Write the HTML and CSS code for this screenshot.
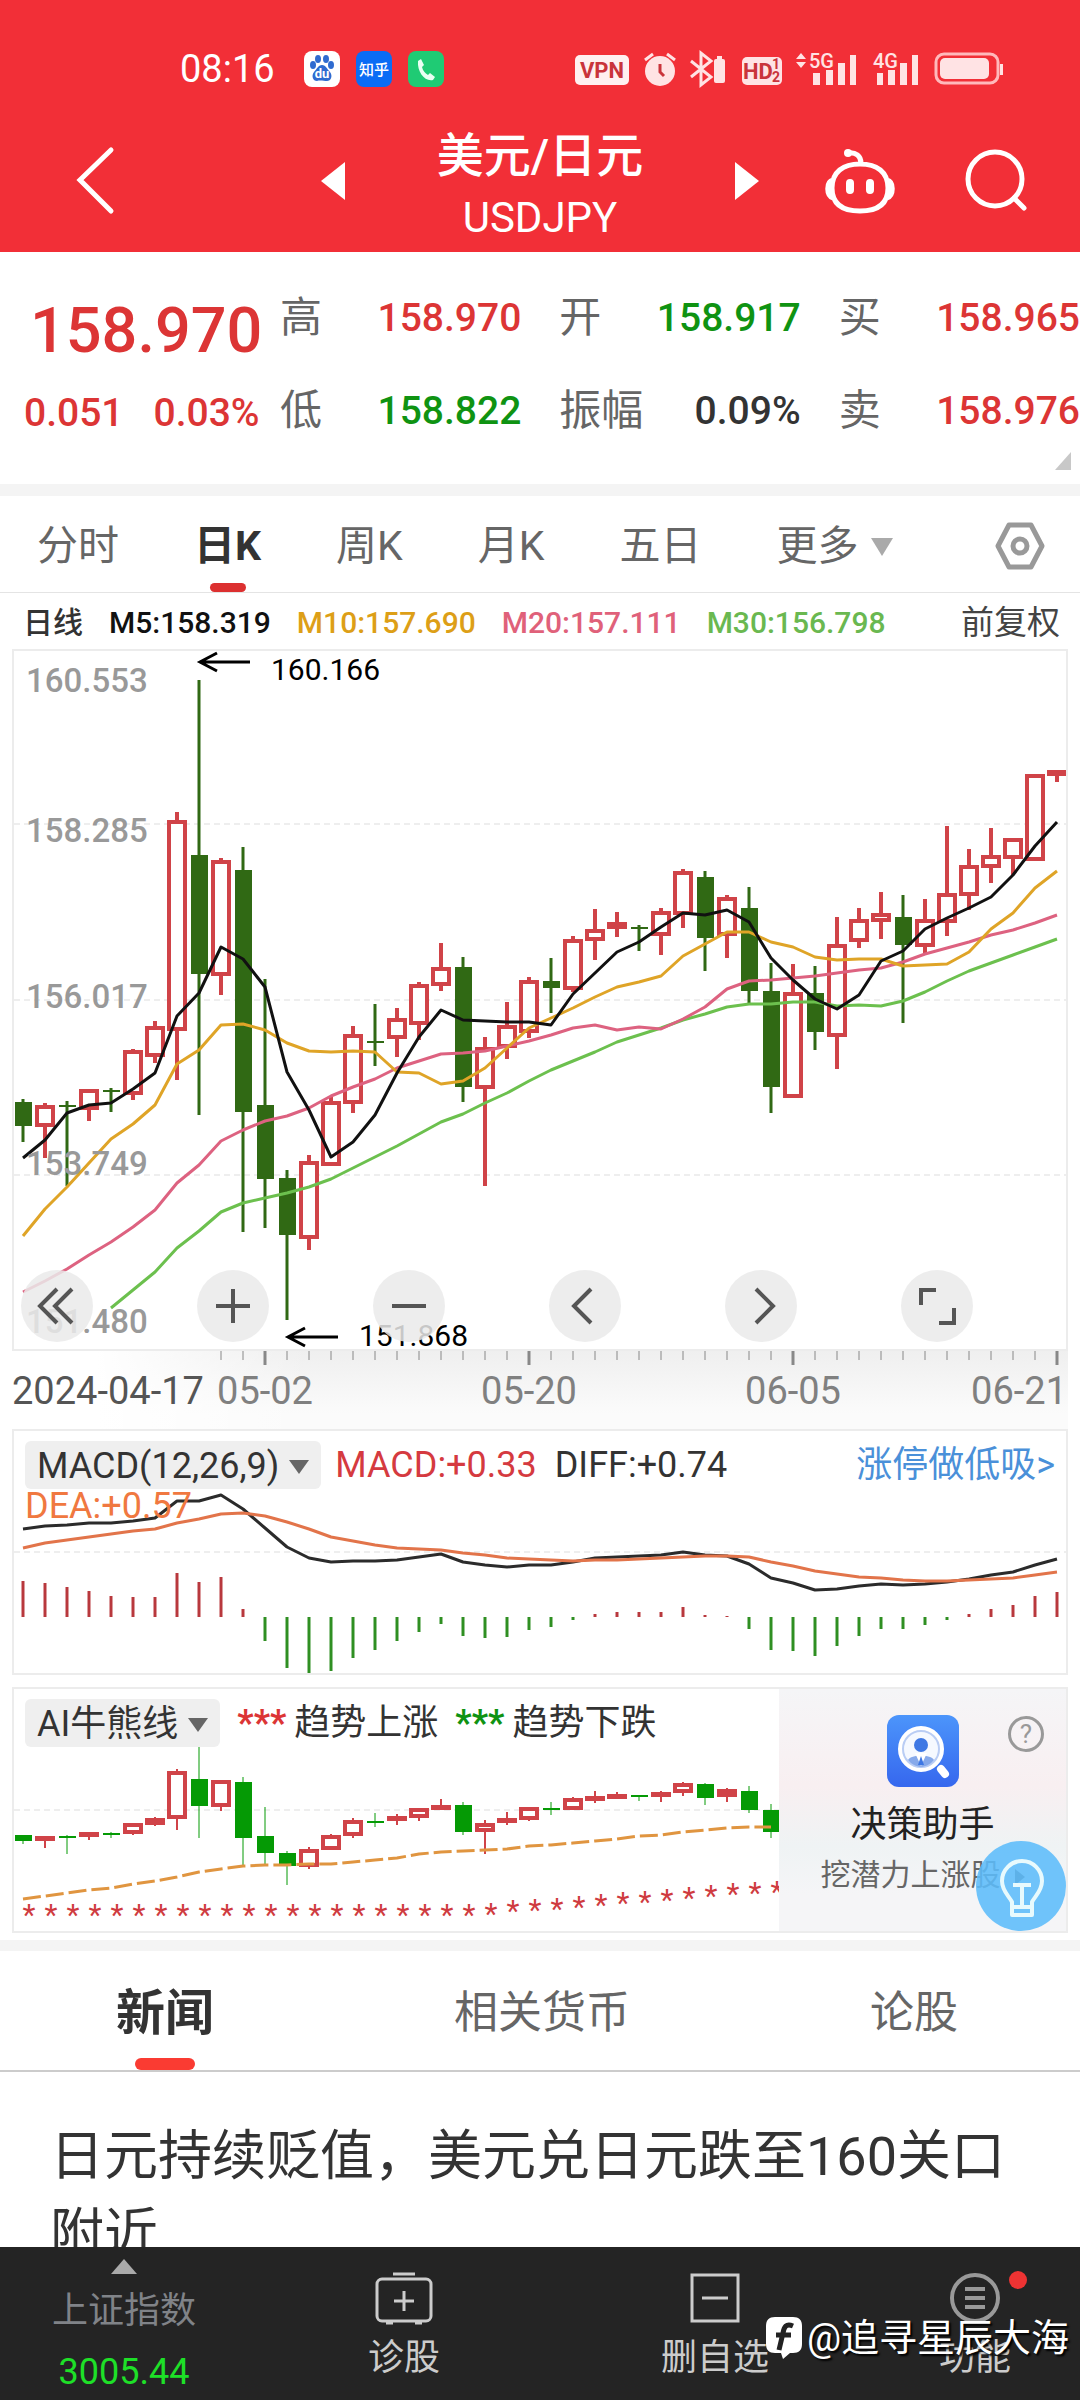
FILE: index.html
```html
<!DOCTYPE html>
<html lang="zh-CN">
<head>
    <meta charset="utf-8">
    <meta name="viewport" content="width=device-width, initial-scale=1">
    <title>美元/日元 USDJPY</title>
    <link rel="stylesheet" href="styles.css">
</head>
<body>
<div id="app">
    <header class="header">
        <div class="status">
            <span class="clock">08:16</span>
            <svg class="app-icon" width="36" height="36" viewBox="0 0 36 36">
                <rect width="36" height="36" rx="8" fill="#fff"/>
                <g fill="#2f6bd0">
                    <ellipse cx="9" cy="14" rx="3" ry="4"/><ellipse cx="14" cy="8" rx="3" ry="4"/>
                    <ellipse cx="22" cy="8" rx="3" ry="4"/><ellipse cx="27" cy="14" rx="3" ry="4"/>
                    <path d="M18 14c4 0 5 4 8 7 3 4 1 9-3 9-3 0-7-1-10 0-4 0-6-5-3-9 3-3 4-7 8-7z"/>
                </g>
                <text x="18" y="27" text-anchor="middle" class="baidu">du</text>
            </svg>
            <svg class="app-icon" width="36" height="36" viewBox="0 0 36 36">
                <rect width="36" height="36" rx="8" fill="#0a6cf5"/>
                <text x="18" y="24" text-anchor="middle" class="zhihu">知乎</text>
            </svg>
            <svg class="app-icon" width="36" height="36" viewBox="0 0 36 36">
                <rect width="36" height="36" rx="8" fill="#1fcb74"/>
                <path d="M10 10l3-2 3 6-2 2c1 4 3 6 6 8l2-2 5 4-2 3c-8 2-16-8-15-19z" fill="#e9fff3"/>
            </svg>
            <svg class="signals" width="430" height="40" viewBox="0 0 430 40">
                <g fill="#ffe3e4">
                    <rect x="1" y="6" width="54" height="30" rx="5" fill="#fff0f0"/>
                    <text x="28" y="29" text-anchor="middle" class="badge">VPN</text>
                    <circle cx="86" cy="22" r="15"/>
                    <path d="M71 11l8-6M101 11l-8-6" stroke="#ffe3e4" stroke-width="3"/>
                    <path d="M86 15v8l4 4" stroke="#c9343b" stroke-width="3" fill="none"/>
                    <path d="M117 12l20 16-10 8V4l10 8-20 16" stroke="#ffe3e4" stroke-width="3" fill="none"/>
                    <rect x="140" y="10" width="11" height="24" rx="2"/><rect x="143" y="7" width="5" height="3"/>
                    <rect x="168" y="8" width="40" height="28" rx="5"/>
                    <text x="184" y="30" text-anchor="middle" class="badge">HD</text>
                    <text x="202" y="20" text-anchor="middle" class="badge-small">1</text>
                    <text x="202" y="33" text-anchor="middle" class="badge-small">2</text>
                    <path d="M222 10l5-6 5 6zM222 13l5 6 5-6z"/>
                    <text x="235" y="19" class="net">5G</text>
                    <path d="M239 24h7v12h-7zM252 21h7v15h-7zM264 14h7v22h-7zM276 6h6v30h-6z"/>
                    <text x="299" y="19" class="net">4G</text>
                    <path d="M303 24h6v12h-6zM314 21h7v15h-7zM326 14h7v22h-7zM338 6h6v30h-6z"/>
                    <rect x="362" y="5" width="62" height="29" rx="8" fill="none" stroke="#ffb9bb" stroke-width="3"/>
                    <rect x="366" y="9" width="49" height="21" rx="5"/><rect x="426" y="15" width="3" height="11"/>
                </g>
            </svg>
        </div>
        <div class="titlebar">
            <button class="icon-btn back" aria-label="返回">
                <svg width="40" height="70" viewBox="0 0 40 70"><path d="M36 4L5 34l31 31" class="line5"/></svg>
            </button>
            <div class="switcher">
                <button class="icon-btn" aria-label="上一个"><svg width="24" height="38" viewBox="0 0 24 38"><path d="M24 0v38L0 19z" fill="#fff"/></svg></button>
                <h1>美元/日元<small>USDJPY</small></h1>
                <button class="icon-btn" aria-label="下一个"><svg width="24" height="38" viewBox="0 0 24 38"><path d="M0 0v38l24-19z" fill="#fff"/></svg></button>
            </div>
            <div class="tools">
                <button class="icon-btn" aria-label="助手">
                    <svg width="72" height="68" viewBox="0 0 72 68">
                        <path d="M36 17c-17 0-28 8-28 24 0 15 9 23 28 23s28-8 28-23c0-16-11-24-28-24zM9 33c-7 2-7 15 0 18M63 33c7 2 7 15 0 18M37 16c0-7-5-11-13-10" class="line5"/>
                        <circle cx="24" cy="6" r="4" fill="#fff"/>
                        <path d="M26 36v7M46 36v7" class="line8"/>
                    </svg>
                </button>
                <button class="icon-btn" aria-label="搜索">
                    <svg width="64" height="64" viewBox="0 0 64 64"><circle cx="31" cy="30" r="27" class="line5"/><path d="M50 49l10 10" class="line5"/></svg>
                </button>
            </div>
        </div>
    </header>

    <main>
        <section class="quote">
            <div class="price">
                <strong>158.970</strong>
                <div class="change"><span>0.051</span><span>0.03%</span></div>
            </div>
            <dl>
                <div><dt>高</dt><dd class="up">158.970</dd></div>
                <div><dt>开</dt><dd class="down">158.917</dd></div>
                <div><dt>买</dt><dd class="up">158.965</dd></div>
                <div><dt>低</dt><dd class="down">158.822</dd></div>
                <div><dt>振幅</dt><dd>0.09%</dd></div>
                <div><dt>卖</dt><dd class="up">158.976</dd></div>
            </dl>
            <span class="corner"></span>
        </section>

        <nav class="periods">
            <button>分时</button>
            <button class="active">日K</button>
            <button>周K</button>
            <button>月K</button>
            <button>五日</button>
            <button>更多<i class="caret"></i></button>
            <button class="settings" aria-label="设置">
                <svg width="50" height="48" viewBox="0 0 50 48"><path d="M14 3h22l11 21-11 21H14L3 24z"/><circle cx="25" cy="24" r="7"/></svg>
            </button>
        </nav>

        <div class="averages">
            <b>日线</b>
            <span class="m5">M5:158.319</span>
            <span class="m10">M10:157.690</span>
            <span class="m20">M20:157.111</span>
            <span class="m30">M30:156.798</span>
            <button>前复权</button>
        </div>

        <section class="box">
            <svg id="kline" viewBox="14 651 1052 698"></svg>
            <div class="chart-tools">
                <button aria-label="收起"><svg viewBox="0 0 72 72"><path d="M36 19L19 36l17 17M51 19L34 36l17 17"/></svg></button>
                <button aria-label="放大"><svg viewBox="0 0 72 72"><path d="M36 19v34M19 36h34"/></svg></button>
                <button aria-label="缩小"><svg viewBox="0 0 72 72"><path d="M19 36h34"/></svg></button>
                <button aria-label="左移"><svg viewBox="0 0 72 72"><path d="M42 19L25 36l17 17"/></svg></button>
                <button aria-label="右移"><svg viewBox="0 0 72 72"><path d="M31 19l17 17-17 17"/></svg></button>
                <button aria-label="全屏"><svg viewBox="0 0 72 72"><path d="M35 20H20v15M53 38v15H38"/></svg></button>
            </div>
        </section>
        <svg id="axis" class="axis" viewBox="12 1351 1056 78"></svg>

        <section class="box">
            <svg id="macd" viewBox="14 1431 1052 242"></svg>
            <div class="legend">
                <button class="pick">MACD(12,26,9)<i class="caret"></i></button>
                <span class="macd">MACD:+0.33</span>
                <span class="diff">DIFF:+0.74</span>
                <a href="#tip">涨停做低吸&gt;</a>
                <span class="dea">DEA:+0.57</span>
            </div>
        </section>

        <section class="box ai">
            <div class="ai-chart">
                <svg id="bull" viewBox="14 1689 765 242"></svg>
                <div class="legend">
                    <button class="pick">AI牛熊线<i class="caret"></i></button>
                    <span><i class="stars up">***</i>趋势上涨</span>
                    <span><i class="stars down">***</i>趋势下跌</span>
                </div>
            </div>
            <aside class="helper">
                <svg width="72" height="72" viewBox="0 0 72 72">
                    <defs><linearGradient id="blue" x2="0" y2="1"><stop offset="0" stop-color="#4c95fb"/><stop offset="1" stop-color="#3667ee"/></linearGradient></defs>
                    <rect width="72" height="72" rx="12" fill="url(#blue)"/>
                    <circle cx="34" cy="34" r="21" fill="#f5f9ff" stroke="#fff" stroke-width="4"/>
                    <circle cx="34" cy="34" r="18" fill="none" stroke="#b9cdf4" stroke-width="2"/>
                    <path d="M21 45c3-6 23-6 26 0-7 9-19 9-26 0z" fill="#86a9ea"/>
                    <path d="M28 38l6 13 6-13z" fill="#fff"/><path d="M34 41l3 9h-6z" fill="#3e78e4"/>
                    <circle cx="34" cy="30" r="7" fill="#3e78e4"/>
                    <path d="M54 54l4 5" stroke="#fff" stroke-width="8" stroke-linecap="round"/>
                </svg>
                <h2>决策助手</h2>
                <p>挖潜力上涨股<i class="next"></i></p>
                <button class="help" aria-label="说明">?</button>
                <button class="bulb" aria-label="提示">
                    <svg width="90" height="90" viewBox="0 0 90 90">
                        <path d="M36 74V61c-3-6-10-11-10-21 0-11 9-20 20-20s20 9 20 20c0 10-7 15-10 21v13zM36 66h20M46 66V44M37 44h18"/>
                    </svg>
                </button>
            </aside>
        </section>

        <nav class="news-tabs">
            <button class="active">新闻</button>
            <button>相关货币</button>
            <button>论股</button>
        </nav>
        <article class="news"><a href="#news">日元持续贬值，美元兑日元跌至160关口附近</a></article>
    </main>

    <footer class="bottom">
        <button class="index"><i class="caret-up"></i><span>上证指数</span><b>3005.44</b></button>
        <button>
            <svg width="58" height="54" viewBox="0 0 58 54"><rect x="2" y="7" width="54" height="42" rx="5"/><path d="M18 2h22M29 19v20M19 29h20M11 51h7M40 51h7"/></svg>
            <span>诊股</span>
        </button>
        <button>
            <svg width="50" height="54" viewBox="0 0 50 54"><path d="M2 3h46v46H2zM12 26h26"/></svg>
            <span>删自选</span>
        </button>
        <button class="more">
            <svg width="52" height="54" viewBox="0 0 52 54"><circle cx="26" cy="26" r="23"/><path d="M16 17h20M16 26h20M16 35h20"/></svg>
            <span>功能</span>
            <i class="dot"></i>
        </button>
        <div class="watermark">
            <svg width="38" height="44" viewBox="0 0 38 44"><path d="M10 1h18c6 0 9 3 9 9v18c0 6-3 9-9 9h-3l-7 6-2-6h-6c-6 0-9-3-9-9V10c0-6 3-9 9-9z" fill="#fff"/><path d="M28 10c-7-3-9 1-10 7l-4 17M11 19h15" fill="none" stroke="#222" stroke-width="5"/></svg>
            <span>@追寻星辰大海</span>
        </div>
    </footer>
</div>
<script src="chart.js"></script>
</body>
</html>
```
FILE: styles.css
```css
* { box-sizing: border-box; }
body { margin: 0; background: #fff; color: #333; font-family: Roboto, "Noto Sans CJK SC", sans-serif; }
#app { display: flex; flex-direction: column; height: 100vh; overflow: hidden; }
button { margin: 0; padding: 0; border: 0; background: none; color: inherit; font: inherit; line-height: inherit; }
svg { display: block; }
i { font-style: normal; }
a { color: inherit; text-decoration: none; }
.up { color: #dc3535; }
.down { color: #0f9312; }

.header { flex: none; height: 252px; background: #f22f37; color: #fff; }
.status { display: flex; align-items: center; height: 110px; padding: 28px 76px 0 180px; }
.clock { width: 124px; font-size: 38px; line-height: 40px; }
.app-icon { margin-right: 16px; }
.signals { margin-left: auto; }
.baidu { font-size: 13px; font-weight: 700; fill: #fff; }
.zhihu { font-size: 15px; font-weight: 500; fill: #fff; }
.badge { font-size: 22px; font-weight: 700; fill: #c9343b; }
.badge-small { font-size: 14px; font-weight: 700; fill: #c9343b; }
.net { font-size: 20px; font-weight: 500; }
.titlebar { display: grid; grid-template-columns: 1fr 438px 1fr; align-items: center; height: 142px; }
.icon-btn { display: block; }
.back { padding-left: 75px; }
.switcher { display: flex; align-items: center; justify-content: space-between; }
.titlebar h1 { margin: 0; padding-top: 12px; font-size: 47px; font-weight: 500; line-height: 62px; text-align: center; }
.titlebar small { display: block; font-size: 42px; font-weight: 400; }
.tools { display: flex; align-items: center; justify-content: flex-end; gap: 68px; padding-right: 52px; }
.line5, .line8 { fill: none; stroke: #fff; stroke-width: 5; stroke-linecap: round; }
.line8 { stroke-width: 8; }

.quote { position: relative; display: grid; grid-template-columns: 280px 1fr; height: 244px; padding-top: 36px; border-bottom: 12px solid #f4f4f4; }
.price { padding-left: 24px; color: #dc3535; }
.price strong { display: block; padding-left: 6px; font-size: 63px; font-weight: 500; line-height: 86px; }
.change { display: flex; gap: 30px; margin-top: 12px; font-size: 39px; font-weight: 500; line-height: 54px; }
.quote dl { display: grid; grid-template-columns: repeat(3, 1fr); grid-auto-rows: 60px; gap: 33px 38px; margin: 0; }
.quote dl div { display: flex; justify-content: space-between; line-height: 60px; }
.quote dt { font-size: 42px; color: #666; }
.quote dd { margin: 0; font-size: 39px; font-weight: 500; }
.corner { position: absolute; right: 9px; bottom: 14px; border: solid transparent; border-width: 9px 8px; border-right-color: #c8c8c8; border-bottom-color: #c8c8c8; }

.periods { display: flex; align-items: center; gap: 75px; height: 97px; padding: 0 35px 0 37px; border-bottom: 1px solid #e4e4e4; color: #666; font-size: 41px; line-height: 92px; }
.periods button { position: relative; padding-top: 4px; white-space: nowrap; }
.periods .active { color: #333; font-weight: 700; }
.periods .active::after { content: ""; position: absolute; left: 50%; bottom: 0; width: 36px; height: 9px; margin-left: -18px; border-radius: 5px; background: #dc3030; }
.settings { margin-left: auto; }
.settings svg { fill: none; stroke: #999; stroke-width: 5; stroke-linejoin: round; }
.caret { display: inline-block; border: solid transparent; border-width: 18px 11px 0; border-top-color: #aaa; margin-left: 12px; vertical-align: 4px; }

.averages { display: flex; align-items: center; gap: 26px; height: 56px; padding: 4px 20px 0 23px; font-size: 30px; font-weight: 500; line-height: 52px; }
.averages b { font-weight: 500; }
.averages button { margin-left: auto; font-size: 33px; font-weight: 400; color: #444; }
.m5 { color: #111; }
.m10 { color: #dd9f17; }
.m20 { color: #e0617a; }
.m30 { color: #6ab850; }

.box { position: relative; margin: 0 12px 12px; border: 2px solid #ececec; }
.box > svg, .ai-chart > svg { width: 100%; height: auto; }
#app .axis { width: auto; margin: -12px 12px 0; background: linear-gradient(90deg, #fff 8%, transparent 28%), linear-gradient(#efefef, #fbfbfb 80%); }
.chart-tools { position: absolute; left: 7px; right: 93px; bottom: 7px; display: flex; justify-content: space-between; }
.chart-tools button { width: 72px; height: 72px; border-radius: 50%; background: rgba(234, 234, 234, 0.85); }
.chart-tools svg { fill: none; stroke: #555; stroke-width: 4; }

.grid { stroke: #ddd; stroke-width: 1; stroke-dasharray: 6 4; }
.ma { fill: none; stroke-width: 3; stroke-linejoin: round; }
.scale { font-size: 33px; font-weight: 500; fill: #999; }
.mark { font-size: 30px; fill: #000; }
.arrow { fill: none; stroke: #000; stroke-width: 3; }
.date { font-size: 38px; fill: #808080; }
.date-first { fill: #555; }
.star { font-size: 30px; fill: #cf3b40; text-anchor: middle; }

.legend { position: absolute; inset: 10px 11px auto; display: flex; flex-wrap: wrap; align-items: center; font-size: 36px; line-height: 48px; white-space: nowrap; }
.pick { padding: 2px 12px 0; margin-right: 14px; border-radius: 6px; background: #efefef; line-height: 46px; }
.pick .caret { margin-left: 10px; border-width: 14px 10px 0; border-top-color: #666; }
.macd { margin-right: 18px; color: #d53a40; }
.legend a { margin-left: auto; color: #4a90d9; }
.dea { flex-basis: 100%; margin-top: -7px; color: #f07840; }

.ai { display: grid; grid-template-columns: 765fr 287fr; margin-bottom: 7px; }
.ai-chart { position: relative; overflow: hidden; }
.ai-chart .legend { gap: 17px; }
.ai-chart .pick { margin: 0; }
.stars { margin-right: 8px; font-weight: 700; }
.helper { position: relative; display: flex; flex-direction: column; align-items: center; padding-top: 26px; background: linear-gradient(#f5f5f7, #f8eff1 40%, #eff3f4 65%, #f5f5f7 85%); }
.helper h2 { margin: 12px 0 0; color: #222; font-size: 36px; font-weight: 400; line-height: 52px; }
.helper p { margin: 0; color: #666; font-size: 30px; line-height: 48px; }
.next { display: inline-block; margin-left: 14px; border: solid transparent; border-width: 8px 0 8px 10px; border-left-color: #666; }
.help { position: absolute; top: 27px; right: 22px; width: 36px; height: 36px; border: 3px solid #999; border-radius: 50%; color: #999; font-size: 26px; line-height: 30px; }
.bulb { position: absolute; right: 0; bottom: 0; width: 90px; height: 90px; border-radius: 50%; background: rgba(92, 188, 250, 0.88); }
.bulb svg { fill: none; stroke: #e8fafd; stroke-width: 4; stroke-linejoin: round; }

.news-tabs { display: flex; align-items: center; justify-content: space-between; height: 132px; padding: 0 122px 0 116px; border-top: 11px solid #f4f4f4; border-bottom: 2px solid #ccc; color: #666; font-size: 44px; line-height: 113px; }
.news-tabs button { position: relative; padding-top: 6px; }
.news-tabs .active { color: #333; font-size: 49px; font-weight: 700; }
.news-tabs .active::after { content: ""; position: absolute; left: 50%; bottom: 0; width: 60px; height: 12px; margin-left: -30px; border-radius: 6px; background: #fa3b32; }
.news { padding: 46px 52px 0 50px; font-size: 54px; line-height: 78px; }

main { flex: 1; min-height: 0; overflow: hidden; }
.bottom { position: relative; flex: none; display: grid; grid-template-columns: 248fr 312fr 310fr 210fr; height: 153px; background: #242424; color: #ccc; font-size: 36px; line-height: 48px; }
.bottom button { position: relative; display: flex; flex-direction: column; align-items: center; padding-top: 25px; gap: 8px; }
.bottom button svg { fill: none; stroke: #ccc; stroke-width: 3; }
.bottom .index { gap: 13px; padding-top: 12px; color: #808388; }
.caret-up { border: solid transparent; border-width: 0 13px 15px; border-bottom-color: #aaa; }
.index b { color: #1ee028; font-weight: 400; }
.dot { position: absolute; top: 24px; left: 50%; width: 18px; height: 18px; margin-left: 34px; border-radius: 50%; background: #e33; }
.bottom .more svg { stroke: #999; stroke-width: 4; }
.watermark { position: absolute; right: 11px; bottom: 36px; display: flex; align-items: center; gap: 4px; color: #fff; font-size: 38px; line-height: 52px; text-shadow: 2px 2px 2px #000; }
```
FILE: chart.js
```js
// [rising, high, top, bottom, low] in chart units, one row per day
const candles = [
    [0, 1099, 1102, 1126, 1142], [1, 1103, 1105, 1127, 1158], [0, 1101, 1105, 1107, 1186], [1, 1089, 1089, 1110, 1121],
    [0, 1088, 1090, 1092, 1112], [1, 1049, 1050, 1095, 1100], [1, 1021, 1026, 1057, 1063], [1, 812, 820, 1031, 1080],
    [0, 680, 855, 974, 1115], [1, 858, 860, 976, 995], [0, 847, 870, 1112, 1232], [0, 979, 1105, 1179, 1228],
    [0, 1170, 1178, 1235, 1320], [1, 1155, 1161, 1239, 1250], [1, 1097, 1101, 1166, 1166], [1, 1026, 1034, 1104, 1113],
    [0, 1004, 1041, 1043, 1066], [1, 1008, 1018, 1039, 1057], [1, 982, 984, 1025, 1040], [1, 943, 967, 986, 991],
    [0, 957, 967, 1087, 1102], [1, 1037, 1047, 1089, 1186], [1, 1002, 1025, 1048, 1059], [1, 977, 980, 1033, 1038],
    [0, 958, 981, 988, 1013], [1, 936, 939, 990, 992], [1, 909, 929, 941, 960], [1, 912, 922, 929, 937],
    [0, 925, 927, 929, 951], [1, 908, 911, 936, 955], [1, 869, 871, 915, 928], [0, 871, 877, 938, 971],
    [1, 895, 897, 936, 958], [0, 887, 908, 991, 1003], [0, 963, 991, 1087, 1113], [1, 964, 992, 1098, 1098],
    [0, 966, 993, 1032, 1050], [1, 917, 944, 1037, 1069], [1, 908, 919, 942, 948], [1, 892, 913, 922, 939],
    [0, 895, 917, 945, 1023], [1, 899, 919, 947, 955], [1, 826, 893, 923, 936], [1, 849, 865, 896, 910],
    [1, 828, 855, 868, 883], [1, 838, 838, 859, 875], [1, 774, 774, 861, 861], [1, 770, 770, 776, 782]
];
const ma5 = [1158, 1140, 1113, 1105, 1103, 1089, 1073, 1016, 993, 947, 959, 987, 1072, 1110, 1157, 1142, 1115, 1073, 1037, 1010, 1020, 1021, 1022, 1022, 1025, 994, 973, 952, 942, 927, 913, 915, 910, 922, 958, 980, 999, 1009, 995, 961, 951, 929, 918, 908, 897, 875, 846, 822];
const ma10 = [1236, 1209, 1187, 1163, 1139, 1124, 1105, 1064, 1050, 1025, 1024, 1030, 1043, 1051, 1052, 1051, 1052, 1072, 1073, 1084, 1081, 1068, 1048, 1028, 1018, 1008, 997, 987, 982, 976, 956, 944, 932, 932, 942, 947, 957, 960, 959, 959, 966, 965, 964, 952, 929, 913, 888, 871];
const ma20 = [1292, 1281, 1269, 1255, 1242, 1227, 1210, 1183, 1165, 1141, 1130, 1121, 1116, 1108, 1096, 1087, 1079, 1068, 1061, 1054, 1053, 1051, 1046, 1041, 1035, 1028, 1025, 1030, 1027, 1029, 1019, 1007, 989, 981, 980, 978, 976, 973, 970, 968, 962, 954, 948, 942, 935, 930, 923, 915];
const ma30 = [1308, 1290, 1272, 1248, 1231, 1212, 1203, 1198, 1193, 1187, 1179, 1168, 1157, 1146, 1134, 1122, 1114, 1103, 1093, 1081, 1070, 1061, 1052, 1042, 1035, 1028, 1020, 1014, 1007, 1004, 1004, 1002, 1002, 1006, 1005, 1006, 1001, 992, 981, 971, 963, 955, 947, 939];
const bars = [1581, 1583, 1587, 1591, 1596, 1597, 1597, 1573, 1582, 1577, 1609, 1641, 1668, 1674, 1671, 1658, 1650, 1641, 1632, 1624, 1636, 1638, 1637, 1630, 1627, 1620, 1614, 1612, 1612, 1612, 1607, 1615, 1616, 1629, 1650, 1651, 1656, 1646, 1636, 1629, 1629, 1625, 1620, 1614, 1609, 1605, 1596, 1592];
const diff = [1529, 1526, 1525, 1523, 1523, 1521, 1518, 1501, 1501, 1495, 1509, 1528, 1547, 1558, 1562, 1561, 1561, 1560, 1557, 1554, 1562, 1565, 1567, 1565, 1565, 1562, 1558, 1557, 1556, 1555, 1552, 1555, 1556, 1564, 1578, 1583, 1590, 1589, 1586, 1584, 1585, 1584, 1582, 1579, 1575, 1572, 1565, 1559];
const dea = [1548, 1543, 1540, 1537, 1534, 1531, 1529, 1523, 1519, 1514, 1513, 1516, 1522, 1529, 1537, 1541, 1545, 1548, 1549, 1550, 1553, 1555, 1558, 1559, 1560, 1561, 1560, 1560, 1559, 1558, 1557, 1556, 1556, 1557, 1562, 1566, 1571, 1574, 1577, 1578, 1580, 1581, 1581, 1580, 1579, 1578, 1575, 1572];
const trend = [1899, 1896, 1893, 1890, 1888, 1884, 1881, 1877, 1872, 1869, 1866, 1865, 1865, 1864, 1864, 1862, 1860, 1858, 1854, 1852, 1851, 1850, 1849, 1846, 1845, 1843, 1841, 1839, 1836, 1835, 1832, 1830, 1828, 1827, 1827];
const stars = [1909, 1906, 1905, 1904, 1902, 1900, 1898, 1897, 1895, 1893, 1891, 1889, 1888, 1887];

const x = (i) => 23 + i * 22;

const line = (points, color, start = 0, extra = '') =>
    `<polyline class="ma" stroke="${color}" ${extra} points="${points.map((y, i) => `${x(i + start)},${y}`).join(' ')}"/>`;

const hline = (y, x2 = 1066) => `<line class="grid" x1="14" x2="${x2}" y1="${y}" y2="${y}"/>`;

const candle = ([up, high, top, bottom, low], i, green, wick) => {
    const c = up ? '#d04348' : green;
    const sticks = `<path d="M${x(i)} ${high}V${top}M${x(i)} ${bottom}V${low}" stroke="${c}" stroke-width="${up ? wick + 1 : wick}"/>`;
    const h = Math.max(bottom - top, 2);
    if (!up) return sticks + `<rect x="${x(i) - 8}" y="${top}" width="17" height="${h}" fill="${c}"/>`;
    return sticks + `<rect x="${x(i) - 8}" y="${top + 2}" width="16" height="${Math.max(h - 4, 1)}" fill="#fff" stroke="${c}" stroke-width="4"/>`;
};

const arrow = (px, py) => `<path class="arrow" d="M${px + 51} ${py}H${px + 1}M${px + 18} ${py - 9}L${px + 1} ${py}l17 9"/>`;

document.getElementById('kline').innerHTML =
    [824, 1000, 1175].map((y) => hline(y)).join('') +
    candles.map((c, i) => candle(c, i, '#306914', 3)).join('') +
    line(ma30, '#6cc04e', 4) + line(ma20, '#dd6280') + line(ma10, '#dfa427') + line(ma5, '#111') +
    [['160.553', 692], ['158.285', 842], ['156.017', 1008], ['153.749', 1175], ['151.480', 1333]]
        .map(([t, y]) => `<text class="scale" x="26" y="${y}">${t}</text>`).join('') +
    arrow(199, 662) + '<text class="mark" x="271" y="680">160.166</text>' +
    arrow(287, 1337) + '<text class="mark" x="359" y="1346">151.868</text>';

let ticks = '';
for (let i = 9; i < 48; i++) {
    const major = (i + 1) % 12 === 0;
    ticks += `<line x1="${x(i)}" x2="${x(i)}" y1="1351" y2="${major ? 1365 : 1360}" stroke="#888" stroke-width="${major ? 3 : 1}"/>`;
}
document.getElementById('axis').innerHTML = ticks +
    '<text class="date date-first" x="12" y="1404">2024-04-17</text>' +
    [['05-02', 265], ['05-20', 529], ['06-05', 793]]
        .map(([t, px]) => `<text class="date" x="${px}" y="1404" text-anchor="middle">${t}</text>`).join('') +
    '<text class="date" x="1067" y="1404" text-anchor="end">06-21</text>';

document.getElementById('macd').innerHTML = hline(1552) +
    bars.map((y, i) => `<line x1="${x(i)}" x2="${x(i)}" y1="1617" y2="${y}" stroke="${y < 1617 ? '#b8383d' : '#2f8f22'}" stroke-width="3"/>`).join('') +
    line(diff, '#2b2b2b') + line(dea, '#e2744a');

// the small chart reuses the daily candles on a flatter scale
const flat = (y) => Math.round(1771 + (y - 820) * 0.228);
document.getElementById('bull').innerHTML = hline(1810, 779) +
    candles.slice(0, 35).map(([up, ...ys], i) => candle([up, ...ys.map(flat)], i, '#059a05', 1)).join('') +
    line(trend, '#e09540', 0, 'stroke-dasharray="18 5"') +
    Array.from({ length: 35 }, (_, i) => `<text class="star" x="${x(i) + 6}" y="${(i < 21 ? 1910 : stars[i - 21]) + 15}">*</text>`).join('');
```
